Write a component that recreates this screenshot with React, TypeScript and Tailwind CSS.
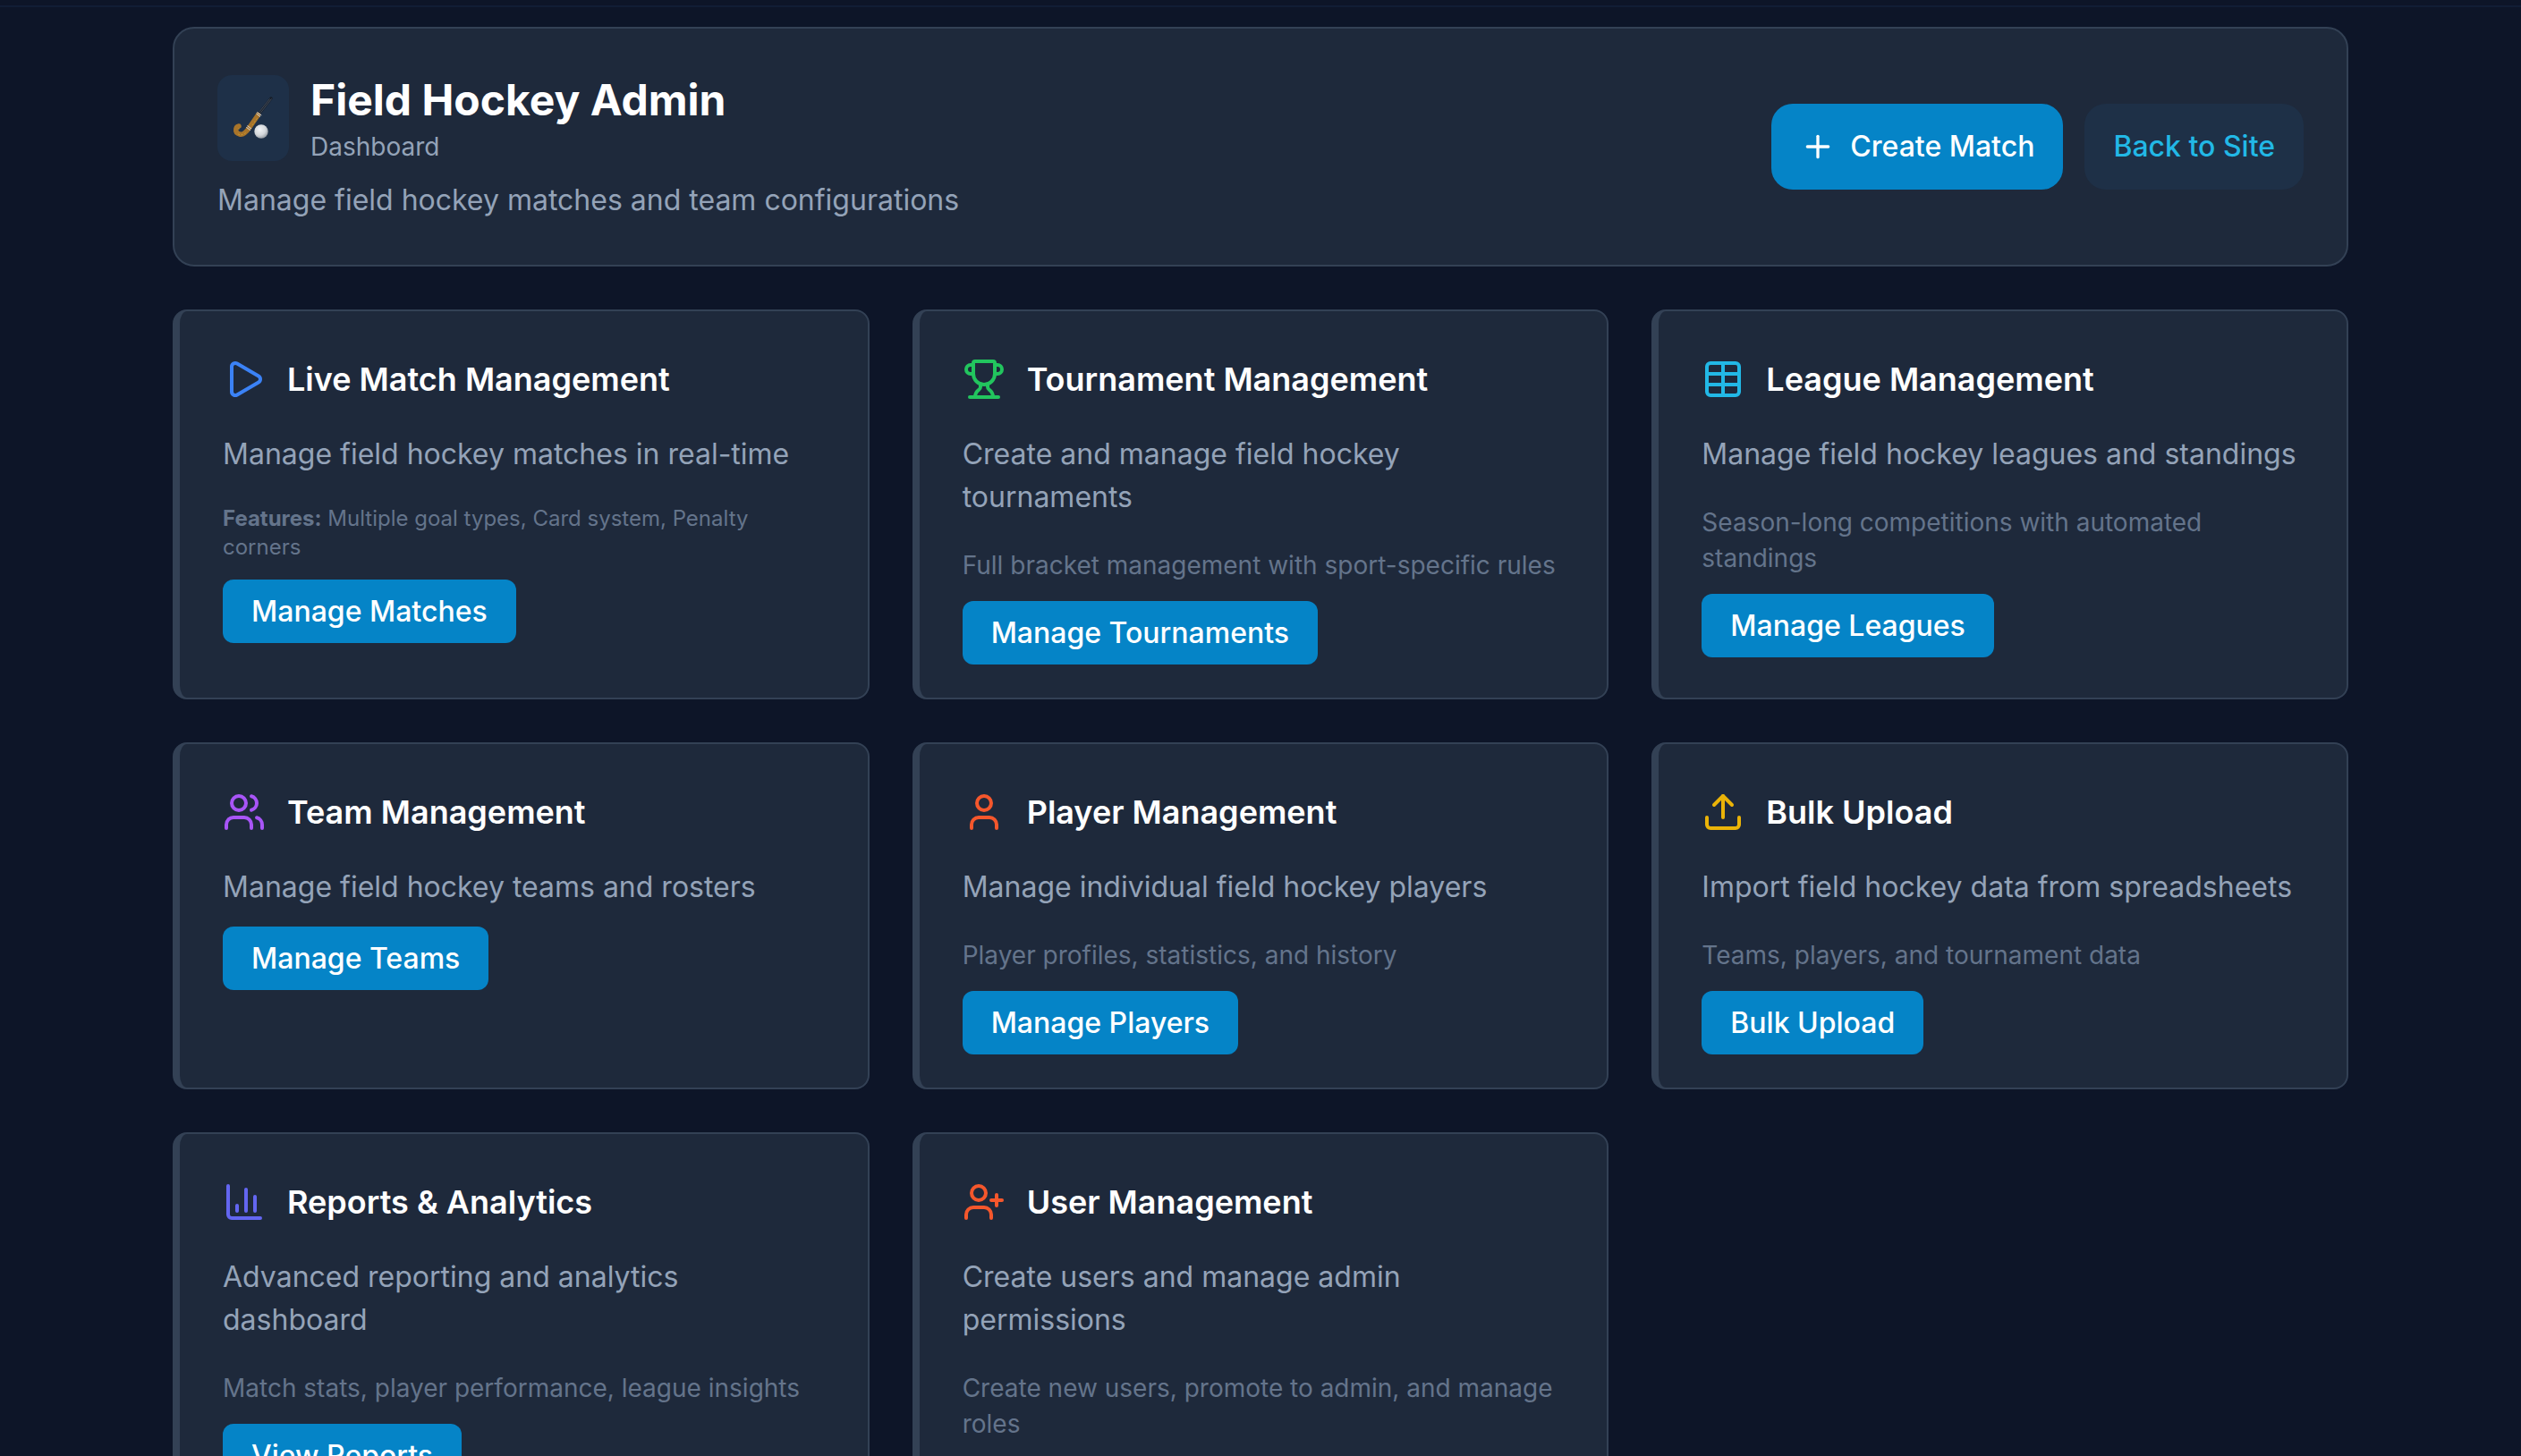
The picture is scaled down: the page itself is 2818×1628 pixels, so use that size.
import React from 'react';
import {
  ChartColumn,
  Play,
  Plus,
  Table,
  Trophy,
  Upload,
  User,
  UserPlus,
  Users,
  type LucideIcon,
} from 'lucide-react';

interface AdminCard {
  title: string;
  icon: LucideIcon;
  iconClass: string;
  description: string;
  features?: string;
  note?: string;
  action: string;
}

const cards: AdminCard[] = [
  {
    title: 'Live Match Management',
    icon: Play,
    iconClass: 'text-[#3b82f6]',
    description: 'Manage field hockey matches in real-time',
    features: 'Multiple goal types, Card system, Penalty corners',
    action: 'Manage Matches',
  },
  {
    title: 'Tournament Management',
    icon: Trophy,
    iconClass: 'text-[#22c55e]',
    description: 'Create and manage field hockey tournaments',
    note: 'Full bracket management with sport-specific rules',
    action: 'Manage Tournaments',
  },
  {
    title: 'League Management',
    icon: Table,
    iconClass: 'text-[#22b8e6]',
    description: 'Manage field hockey leagues and standings',
    note: 'Season-long competitions with automated standings',
    action: 'Manage Leagues',
  },
  {
    title: 'Team Management',
    icon: Users,
    iconClass: 'text-[#a855f7]',
    description: 'Manage field hockey teams and rosters',
    action: 'Manage Teams',
  },
  {
    title: 'Player Management',
    icon: User,
    iconClass: 'text-[#f5572c]',
    description: 'Manage individual field hockey players',
    note: 'Player profiles, statistics, and history',
    action: 'Manage Players',
  },
  {
    title: 'Bulk Upload',
    icon: Upload,
    iconClass: 'text-[#eab308]',
    description: 'Import field hockey data from spreadsheets',
    note: 'Teams, players, and tournament data',
    action: 'Bulk Upload',
  },
  {
    title: 'Reports & Analytics',
    icon: ChartColumn,
    iconClass: 'text-[#6366f1]',
    description: 'Advanced reporting and analytics dashboard',
    note: 'Match stats, player performance, league insights',
    action: 'View Reports',
  },
  {
    title: 'User Management',
    icon: UserPlus,
    iconClass: 'text-[#f5572c]',
    description: 'Create users and manage admin permissions',
    note: 'Create new users, promote to admin, and manage roles',
    action: 'Manage Users',
  },
];

function HockeyIcon() {
  return (
    <svg viewBox="0 0 48 48" className="w-12 h-12 overflow-visible" fill="none">
      <defs>
        <radialGradient id="ball" cx="0.4" cy="0.35" r="0.7">
          <stop offset="0" stopColor="#f1f3f5" />
          <stop offset="0.6" stopColor="#d3d7db" />
          <stop offset="1" stopColor="#8f959c" />
        </radialGradient>
      </defs>
      {/* grip */}
      <path d="M44 2 31.5 18" stroke="#161d28" strokeWidth="3.4" strokeLinecap="round" />
      <path d="M44.5 2.500 32 18.500M42.500 2.500 31 17" stroke="#566070" strokeWidth="0.7" />
      {/* wooden shaft and hook */}
      <path
        d="M29.500 20.500 19.500 35Q14 43 9.500 42.200 4 41 4.800 36.300 5.300 33.500 8 33"
        stroke="#a8742a"
        strokeWidth="5.500"
        strokeLinecap="round"
      />
      <path
        d="M28 25 22 33.500M15 41Q10 44.500 6 41M8 36V38"
        stroke="#eac02c"
        strokeWidth="1"
        strokeLinecap="round"
        strokeDasharray="0.1 3.6"
      />
      <path
        d="M28.500 17.500 33.300 21M27.500 19 32 22.500M17.500 32.500 22 36M16.300 34.300 20.800 37.600"
        stroke="#d5d8dc"
        strokeWidth="1"
      />
      <circle cx="33" cy="39" r="7.700" fill="url(#ball)" />
    </svg>
  );
}

function DashboardHeader() {
  return (
    <header className="flex items-center justify-between p-12 bg-[#1e293b] border-2 border-[#334155] rounded-3xl">
      <div>
        <div className="flex items-center gap-6 mb-4">
          <div className="flex items-center justify-center w-20 h-24 rounded-2xl bg-[#1e3048]">
            <HockeyIcon />
          </div>
          <div>
            <h1 className="text-[48px] leading-[64px] font-bold text-white">Field Hockey Admin</h1>
            <p className="text-[28px] leading-[40px] text-[#94a3b8]">Dashboard</p>
          </div>
        </div>
        <p className="text-[32px] leading-[48px] text-[#94a3b8]">
          Manage field hockey matches and team configurations
        </p>
      </div>
      <div className="flex items-center gap-6">
        <button className="flex items-center gap-4 h-24 px-8 rounded-3xl bg-[#0584c7] text-[32px] font-medium text-white">
          <Plus className="w-10 h-10" />
          Create Match
        </button>
        <button className="h-24 px-8 rounded-3xl bg-[#1e3047] text-[32px] font-medium text-[#22b8e6]">
          Back to Site
        </button>
      </div>
    </header>
  );
}

function ManagementCard({ card }: { card: AdminCard }) {
  const Icon = card.icon;

  return (
    <div className="p-12 bg-[#1e293b] border-2 border-l-8 border-[#334155] rounded-2xl">
      <div className="flex items-center gap-6 mb-8">
        <Icon className={`w-12 h-12 flex-shrink-0 ${card.iconClass}`} />
        <h2 className="text-[36px] leading-[56px] font-semibold text-white">{card.title}</h2>
      </div>
      <p className="mb-8 text-[32px] leading-[48px] text-[#94a3b8]">{card.description}</p>
      {card.features && (
        <p className="mb-8 text-[24px] leading-[32px] text-[#64748b]">
          <strong className="font-bold">Features:</strong> {card.features}
        </p>
      )}
      {card.note && <p className="mb-8 text-[28px] leading-[40px] text-[#64748b]">{card.note}</p>}
      <div className="text-[32px] leading-[48px]">
        <a className="px-8 py-4 rounded-xl bg-[#0584c7] font-medium text-white">{card.action}</a>
      </div>
    </div>
  );
}

export default function App() {
  return (
    <div className="h-[1628px] overflow-hidden bg-[#0d1528] font-['Inter',sans-serif]">
      <div className="h-2 border-b-2 border-[#111d35]" />
      <main className="w-[2432px] ml-[193px] pt-[22px]">
        <DashboardHeader />
        <div className="grid grid-cols-3 gap-12 mt-12">
          {cards.map((card) => (
            <ManagementCard key={card.title} card={card} />
          ))}
        </div>
      </main>
    </div>
  );
}
